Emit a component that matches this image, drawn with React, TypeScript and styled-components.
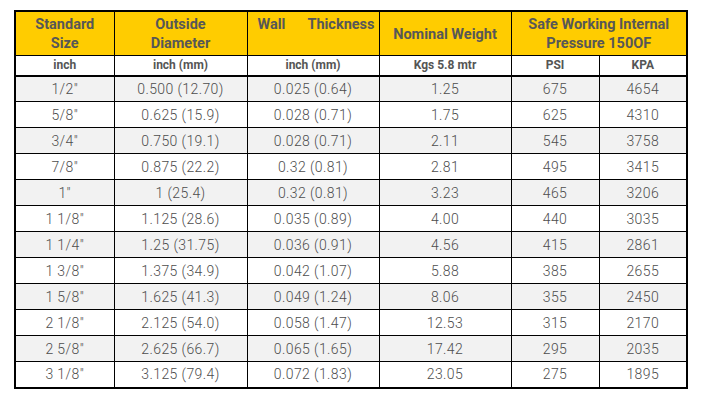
import styled, { createGlobalStyle } from "styled-components";

const GlobalStyle = createGlobalStyle`
  body {
    margin: 0;
    background: #ffffff;
    font-family: Roboto, "Liberation Sans", Arial, sans-serif;
  }
`;

const rows = [
  ["1/2\"", "0.500 (12.70)", "0.025 (0.64)", "1.25", "675", "4654"],
  ["5/8\"", "0.625 (15.9)", "0.028 (0.71)", "1.75", "625", "4310"],
  ["3/4\"", "0.750 (19.1)", "0.028 (0.71)", "2.11", "545", "3758"],
  ["7/8\"", "0.875 (22.2)", "0.32 (0.81)", "2.81", "495", "3415"],
  ["1\"", "1 (25.4)", "0.32 (0.81)", "3.23", "465", "3206"],
  ["1 1/8\"", "1.125 (28.6)", "0.035 (0.89)", "4.00", "440", "3035"],
  ["1 1/4\"", "1.25 (31.75)", "0.036 (0.91)", "4.56", "415", "2861"],
  ["1 3/8\"", "1.375 (34.9)", "0.042 (1.07)", "5.88", "385", "2655"],
  ["1 5/8\"", "1.625 (41.3)", "0.049 (1.24)", "8.06", "355", "2450"],
  ["2 1/8\"", "2.125 (54.0)", "0.058 (1.47)", "12.53", "315", "2170"],
  ["2 5/8\"", "2.625 (66.7)", "0.065 (1.65)", "17.42", "295", "2035"],
  ["3 1/8\"", "3.125 (79.4)", "0.072 (1.83)", "23.05", "275", "1895"],
];

const widths = [99, 133, 132, 132, 88, 88];

export default function App() {
  return (
    <>
      <GlobalStyle />
      <Page>
        <Table>
          <colgroup>
            {widths.map((w, i) => (
              <col key={i} style={{ width: w }} />
            ))}
          </colgroup>
          <thead>
            <HeadRow>
              <HeadCell>
                Standard
                <br />
                Size
              </HeadCell>
              <HeadCell>
                Outside
                <br />
                Diameter
              </HeadCell>
              <HeadCell $top>
                <Spread>
                  <span>Wall</span>
                  <span>Thickness</span>
                </Spread>
              </HeadCell>
              <HeadCell>Nominal Weight</HeadCell>
              <HeadCell colSpan={2}>
                Safe Working Internal
                <br />
                Pressure 150OF
              </HeadCell>
            </HeadRow>
            <UnitRow>
              <UnitCell>inch</UnitCell>
              <UnitCell>inch (mm)</UnitCell>
              <UnitCell>inch (mm)</UnitCell>
              <UnitCell>Kgs 5.8 mtr</UnitCell>
              <UnitCell>PSI</UnitCell>
              <UnitCell>KPA</UnitCell>
            </UnitRow>
          </thead>
          <tbody>
            {rows.map((r, i) => (
              <DataRow key={i} $striped={i % 2 === 0}>
                {r.map((c, j) => (
                  <DataCell key={j}>{c}</DataCell>
                ))}
              </DataRow>
            ))}
          </tbody>
        </Table>
      </Page>
    </>
  );
}

const Page = styled.div`
  padding: 10px 14px;
`;

const Table = styled.table`
  border-collapse: collapse;
  table-layout: fixed;
  width: 674px;
  border: 2px solid #000;
  color: #555;
`;

const HeadRow = styled.tr`
  height: 42px;
  background: #ffcc00;
`;

const HeadCell = styled.th<{ $top?: boolean }>`
  border: 1px solid #000;
  padding: 3px 4px 2px;
  font-size: 14.5px;
  font-weight: 700;
  line-height: 19px;
  text-align: center;
  vertical-align: ${(p) => (p.$top ? "top" : "middle")};
  color: #575757;
`;

const Spread = styled.div`
  display: flex;
  justify-content: space-between;
  padding: 0 0 0 6px;
`;

const UnitRow = styled.tr`
  height: 20px;
  background: #fff;
`;

const UnitCell = styled.th`
  border: 1px solid #000;
  border-bottom: 2px solid #000;
  padding: 0 4px;
  font-size: 12px;
  font-weight: 700;
  line-height: 18px;
  text-align: center;
  color: #555;
`;

const DataRow = styled.tr<{ $striped: boolean }>`
  height: 26px;
  background: ${(p) => (p.$striped ? "#f2f2f2" : "#ffffff")};
`;

const DataCell = styled.td`
  border: 1px solid #000;
  padding: 0 4px;
  font-size: 14px;
  font-weight: 300;
  letter-spacing: 0.4px;
  line-height: 18px;
  text-align: center;
  color: #4d4d4d;
`;
